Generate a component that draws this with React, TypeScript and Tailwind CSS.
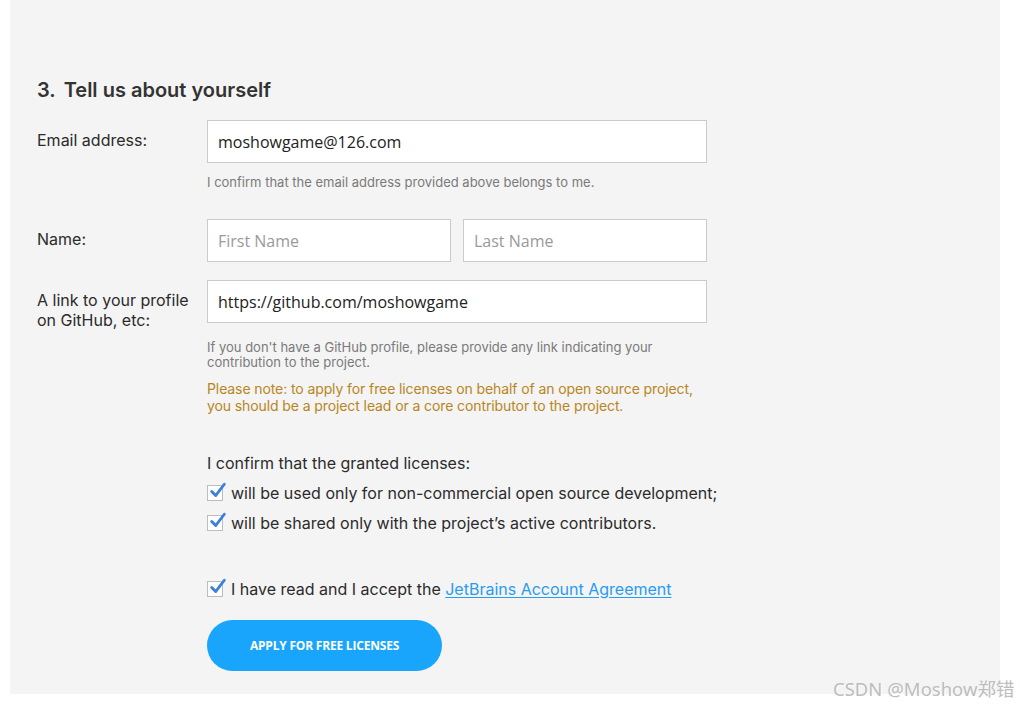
import React from 'react';

const sans = "font-['Inter','Noto_Sans',sans-serif]";
const open = "font-['Open_Sans','Noto_Sans',sans-serif]";

function Check() {
  return (
    <span className="relative mr-[8px] inline-block h-[16px] w-[16px] shrink-0 border border-[#bdbdbd] bg-white">
      <svg viewBox="0 0 20 20" className="absolute -top-[4px] left-[1px] h-[18px] w-[18px]">
        <path d="M3 10.5 L7.5 15 L17 2.5" fill="none" stroke="#3a7fd9" strokeWidth="3.2" strokeLinecap="round" strokeLinejoin="round" />
      </svg>
    </span>
  );
}

function Field({ value, placeholder, className = '' }: { value?: string; placeholder?: string; className?: string }) {
  return (
    <div
      className={`flex h-[43px] items-center border border-[#cbcbcb] bg-white pl-[10px] text-[16px] ${open} ${
        value ? 'text-[#222]' : 'text-[#9a9a9a]'
      } ${className}`}
    >
      {value ?? placeholder}
    </div>
  );
}

export default function App() {
  return (
    <div className={`relative min-h-[707px] bg-white ${sans}`}>
      <div className="ml-[10px] h-[694px] w-[990px] bg-[#f4f4f4] pl-[27px] pt-[76px] text-[#2b2b2b]">
        <h2 className="text-[20px] font-semibold leading-[28px] text-[#333]">
          3.<span className="ml-[8px]">Tell us about yourself</span>
        </h2>

        <div className="mt-[16px] grid grid-cols-[170px_500px]">
          {/* email */}
          <div className="pt-[10px] text-[16px] leading-[20px]">Email address:</div>
          <div>
            <Field value="moshowgame@126.com" />
            <p className="mt-[12px] text-[13px] leading-[15px] text-[#7a7a7a]">
              I confirm that the email address provided above belongs to me.
            </p>
          </div>

          {/* name */}
          <div className="mt-[29px] pt-[10px] text-[16px] leading-[20px]">Name:</div>
          <div className="mt-[29px] flex gap-[12px]">
            <Field placeholder="First Name" className="w-[244px]" />
            <Field placeholder="Last Name" className="w-[244px]" />
          </div>

          {/* link */}
          <div className="mt-[18px] pt-[10px] text-[16px] leading-[20px]">
            A link to your profile
            <br />
            on GitHub, etc:
          </div>
          <div className="mt-[18px]">
            <Field value="https://github.com/moshowgame" />
            <p className="mt-[17px] w-[470px] text-[13px] leading-[15px] text-[#7a7a7a]">
              If you don't have a GitHub profile, please provide any link indicating your contribution to the project.
            </p>
            <p className="mt-[10px] whitespace-nowrap text-[14px] leading-[17px] tracking-[-0.1px] text-[#b8861c]">
              Please note: to apply for free licenses on behalf of an open source project,
              <br />
              you should be a project lead or a core contributor to the project.
            </p>

            <div className="mt-[39px] whitespace-nowrap text-[16px] leading-[20px]">
              <p>I confirm that the granted licenses:</p>
              <p className="mt-[10px] flex items-center">
                <Check />
                will be used only for non-commercial open source development;
              </p>
              <p className="mt-[10px] flex items-center">
                <Check />
                will be shared only with the project’s active contributors.
              </p>
              <p className="mt-[46px] flex items-center">
                <Check />
                I have read and I accept the&nbsp;
                <a href="#" className="text-[#2a9cf0] underline underline-offset-2">
                  JetBrains Account Agreement
                </a>
              </p>
            </div>

            <button
              className={`mt-[21px] flex h-[51px] w-[235px] items-center justify-center rounded-full bg-[#19a5fb] text-[12px] font-bold tracking-[-0.2px] text-white ${open}`}
            >
              APPLY FOR FREE LICENSES
            </button>
          </div>
        </div>
      </div>

      <div className="absolute left-[833px] top-[678px] text-[18.5px] font-normal leading-[22px] text-[#bdbdbd] [text-shadow:1px_1px_0_rgba(255,255,255,0.8)] font-['Noto_Sans','Noto_Sans_CJK_SC',sans-serif]">
        CSDN @Moshow郑错
      </div>
    </div>
  );
}
